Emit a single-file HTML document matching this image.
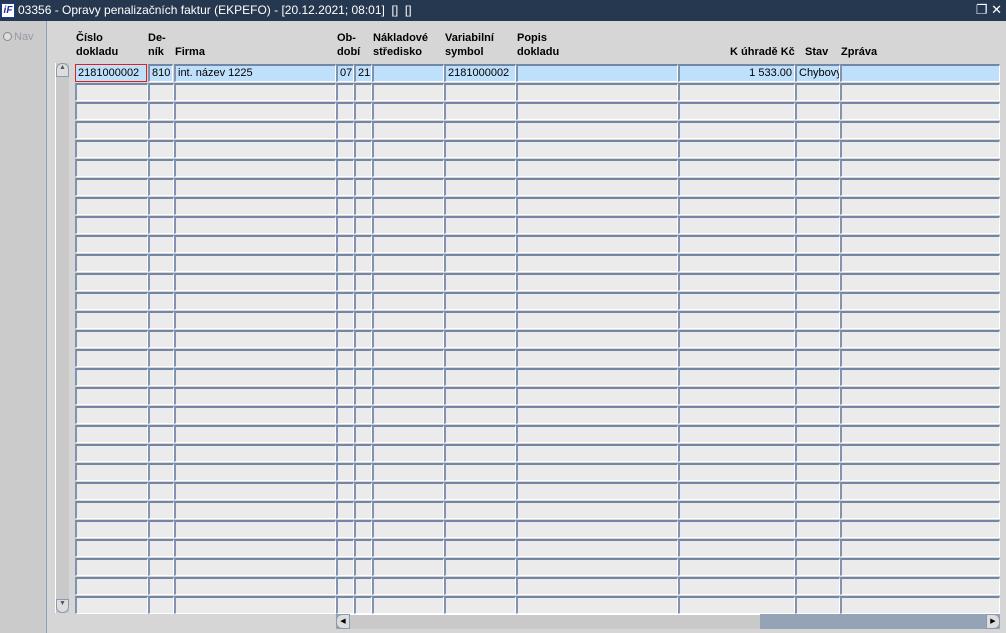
<!DOCTYPE html>
<html><head><meta charset="utf-8"><style>
*{margin:0;padding:0;box-sizing:border-box}
body{width:1006px;height:633px;background:#d6d6d6;font-family:"Liberation Sans",Arial,sans-serif;font-size:11px;position:relative;overflow:hidden;color:#000}
.title{position:absolute;left:0;top:0;width:1006px;height:21px;background:#263850;color:#fff;font-size:12px;line-height:20px;padding-left:18px}
.logo{position:absolute;left:1px;top:3px;width:14px;height:15px;background:#fff;border:1px solid #1a3a9a;color:#1a2fa0;font-weight:bold;font-style:italic;font-size:10px;line-height:13px;text-align:center}
.left{position:absolute;left:0;top:21px;width:47px;height:612px;background:#cbcbcb;border-right:1px solid #8fa0b6}
.nav{position:absolute;left:3px;top:31px;color:#99a;font-size:11px}
.nav i{display:inline-block;width:9px;height:9px;border-radius:50%;border:1px solid #888;background:#ddd;vertical-align:-1px;margin-right:2px}
.hd{position:absolute;font-weight:bold;font-size:11px;line-height:14px}
.c{position:absolute;height:18px;background:#ebebeb;border-top:2px solid #7286a6;border-left:2px solid #8094b2;border-bottom:1px solid #fff;border-right:1px solid #fff;font-size:11px;line-height:15px;padding:0 2px;white-space:nowrap;overflow:hidden}
.sel{background:#bfe0fb}
.vs{position:absolute;left:55px;top:63px;width:14px;height:550px;background:#c9c9c9;border-left:1px solid #fff}
.hs{position:absolute;left:336px;top:614px;width:664px;height:15px;background:#94a3b5}
.thumb{position:absolute;left:14px;top:0;width:410px;height:15px;background:#c9c9c9;border-top:1px solid #fff}
</style></head><body>
<div class="title"><div class="logo">iF</div>03356 - Opravy penalizačních faktur (EKPEFO) - [20.12.2021; 08:01]&nbsp; []&nbsp; []<span style="position:absolute;right:4px;top:0;font-size:13px">&#x2750; ✕</span></div>
<div class="left"></div>
<div class="nav"><i></i>Nav</div>
<div class="hd" style="left:76px;top:31px">Číslo<br>dokladu</div>
<div class="hd" style="left:148px;top:31px">De-<br>ník</div>
<div class="hd" style="left:175px;top:45px">Firma</div>
<div class="hd" style="left:337px;top:31px">Ob-<br>dobí</div>
<div class="hd" style="left:373px;top:31px">Nákladové<br>středisko</div>
<div class="hd" style="left:445px;top:31px">Variabilní<br>symbol</div>
<div class="hd" style="left:517px;top:31px">Popis<br>dokladu</div>
<div class="hd" style="left:730px;top:45px">K úhradě Kč</div>
<div class="hd" style="left:805px;top:45px">Stav</div>
<div class="hd" style="left:841px;top:45px">Zpráva</div>
<div class="vs"><div style="position:absolute;left:0;top:0;width:13px;height:14px;border:1px solid #8a9ab0;border-radius:6px 6px 0 0;background:#ddd;font-size:7px;text-align:center;color:#556">▲</div><div style="position:absolute;left:0;bottom:0;width:13px;height:14px;border:1px solid #8a9ab0;border-radius:0 0 6px 6px;background:#ddd;font-size:7px;text-align:center;color:#556">▼</div></div>
<div class="hs"><div style="position:absolute;left:0;top:0;width:14px;height:15px;background:#ddd;border:1px solid #8a9ab0;border-radius:6px 0 0 6px;font-size:7px;line-height:13px;text-align:center">◀</div><div class="thumb"></div><div style="position:absolute;right:0;top:0;width:14px;height:15px;background:#ddd;border:1px solid #8a9ab0;border-radius:0 6px 6px 0;font-size:7px;line-height:13px;text-align:center">▶</div></div>
<div id="g">
<div class="c sel" style="left:75px;top:64px;width:72px;border:1px solid #e02020;padding-left:2px;line-height:16px">2181000002</div>
<div class="c sel" style="left:148px;top:64px;width:25px;text-align:right">810</div>
<div class="c sel" style="left:174px;top:64px;width:162px">int. název 1225</div>
<div class="c sel" style="left:336px;top:64px;width:18px">07</div>
<div class="c sel" style="left:354px;top:64px;width:18px">21</div>
<div class="c sel" style="left:372px;top:64px;width:72px"></div>
<div class="c sel" style="left:444px;top:64px;width:72px">2181000002</div>
<div class="c sel" style="left:516px;top:64px;width:162px"></div>
<div class="c sel" style="left:678px;top:64px;width:117px;text-align:right">1 533.00</div>
<div class="c sel" style="left:795px;top:64px;width:45px">Chybový</div>
<div class="c sel" style="left:840px;top:64px;width:160px"></div>
</div>
<script>
var cols=[[75,73],[148,26],[174,162],[336,18],[354,18],[372,72],[444,72],[516,162],[678,117],[795,45],[840,160]];
var h='';for(var r=1;r<29;r++){for(var i=0;i<cols.length;i++){h+='<div class="c" style="left:'+cols[i][0]+'px;top:'+(64+r*19)+'px;width:'+cols[i][1]+'px"></div>';}}
document.getElementById('g').insertAdjacentHTML('beforeend',h);
</script>
</body></html>
